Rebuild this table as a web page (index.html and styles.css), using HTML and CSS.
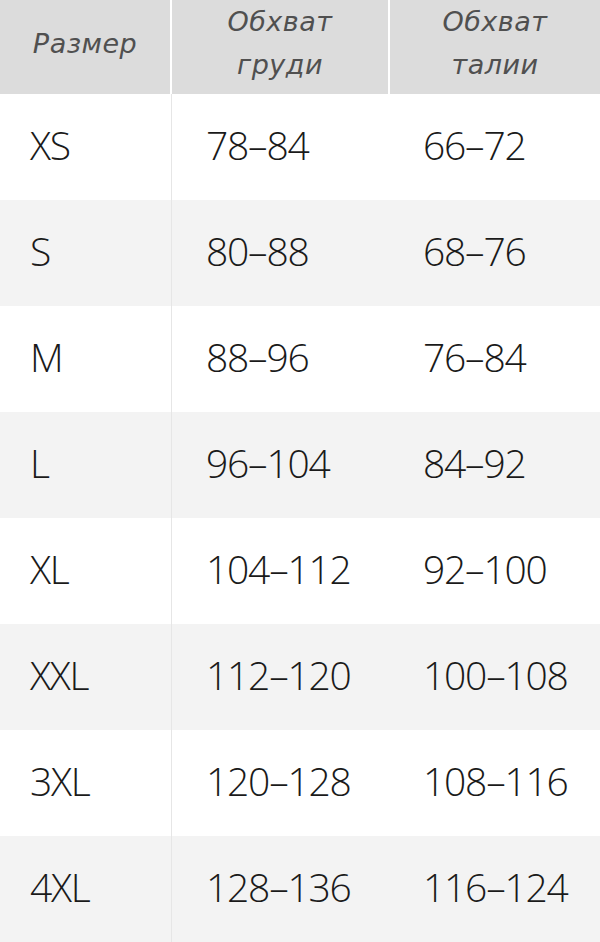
FILE: index.html
```html
<!DOCTYPE html>
<html lang="ru">
<head>
<meta charset="utf-8">
<title>Таблица размеров</title>
<link rel="stylesheet" href="styles.css">
</head>
<body>
<div class="table">
  <div class="row head">
    <div class="cell c1"><span>Размер</span></div>
    <div class="cell c2"><span>Обхват<br>груди</span></div>
    <div class="cell c3"><span>Обхват<br>талии</span></div>
  </div>
  <div class="row"><div class="cell c1">XS</div><div class="cell c2">78–84</div><div class="cell c3">66–72</div></div>
  <div class="row alt"><div class="cell c1">S</div><div class="cell c2">80–88</div><div class="cell c3">68–76</div></div>
  <div class="row"><div class="cell c1">M</div><div class="cell c2">88–96</div><div class="cell c3">76–84</div></div>
  <div class="row alt"><div class="cell c1">L</div><div class="cell c2">96–104</div><div class="cell c3">84–92</div></div>
  <div class="row"><div class="cell c1">XL</div><div class="cell c2">104–112</div><div class="cell c3">92–100</div></div>
  <div class="row alt"><div class="cell c1">XXL</div><div class="cell c2">112–120</div><div class="cell c3">100–108</div></div>
  <div class="row"><div class="cell c1">3XL</div><div class="cell c2">120–128</div><div class="cell c3">108–116</div></div>
  <div class="row alt"><div class="cell c1">4XL</div><div class="cell c2">128–136</div><div class="cell c3">116–124</div></div>
</div>
</body>
</html>
```

FILE: styles.css
```css
html, body {
  margin: 0;
  padding: 0;
  background: #ffffff;
}
.table {
  width: 600px;
  display: flex;
  flex-direction: column;
}
.row {
  display: grid;
  grid-template-columns: 172px 218px 210px;
  height: 106px;
  background: #ffffff;
  font-family: "Open Sans", "Noto Sans", sans-serif;
  font-weight: 300;
  font-size: 39px;
  letter-spacing: -1.2px;
  color: #1a1a1a;
}
.row.alt {
  background: #f3f3f3;
}
.cell {
  display: flex;
  align-items: center;
  box-sizing: border-box;
  padding-bottom: 6px;
}
.c1 {
  padding-left: 30px;
  border-right: 1px solid #e6e6e6;
}
.c2 {
  padding-left: 34px;
}
.c3 {
  padding-left: 33px;
}
.row.head {
  height: 94px;
  background: #ffffff;
  font-family: "DejaVu Sans", sans-serif;
  font-style: italic;
  font-weight: 400;
  font-size: 27px;
  letter-spacing: 0.5px;
  line-height: 43px;
  color: #505050;
}
.head .cell {
  background: #dcdcdc;
  justify-content: center;
  text-align: center;
  padding: 0 0 22px 0;
  border-right: 2px solid #ffffff;
}
.head .c3 {
  border-right: 0;
}
```
